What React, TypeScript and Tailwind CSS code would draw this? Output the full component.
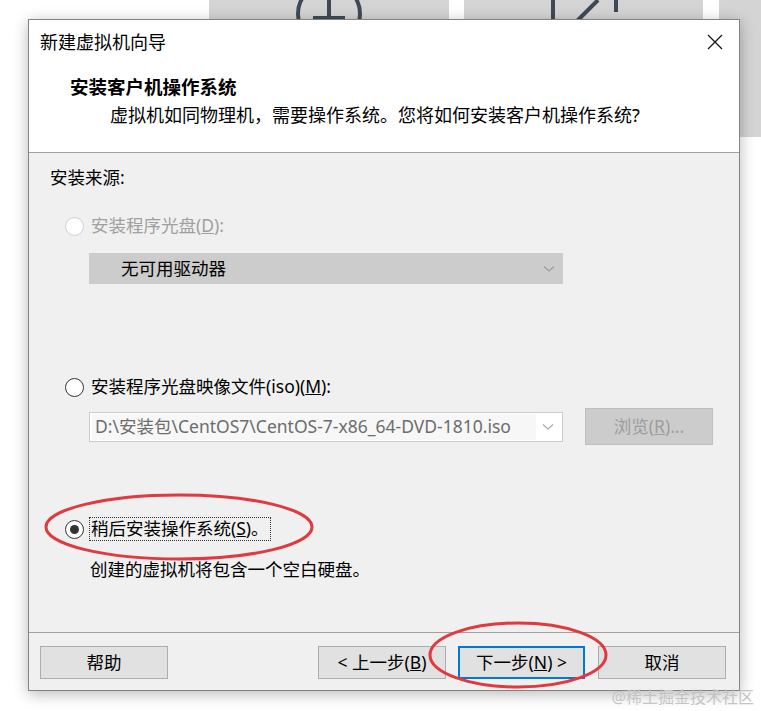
import React from "react";

function Radio({ state }: { state: "disabled" | "off" | "on" }) {
  if (state === "disabled") {
    return <span className="w-[19px] h-[19px] rounded-full border border-[#cfcfcf] bg-white shrink-0" />;
  }
  return (
    <span className="w-[19px] h-[19px] rounded-full border border-[#333333] bg-white shrink-0 flex items-center justify-center">
      {state === "on" && <span className="w-[9px] h-[9px] rounded-full bg-[#333333]" />}
    </span>
  );
}

function Chevron({ color }: { color: string }) {
  return (
    <svg width="12" height="8" viewBox="0 0 12 8" className="shrink-0">
      <path d="M1 1.5 L6 6 L11 1.5" fill="none" stroke={color} strokeWidth="1.1" />
    </svg>
  );
}

function Btn({ children, focused }: { children: React.ReactNode; focused?: boolean }) {
  return (
    <div
      className={
        "h-[33px] flex items-center justify-center bg-[#e1e1e1] text-[17.5px] text-black " +
        (focused ? "w-[127px] border-2 border-[#0078d7]" : "w-[128px] border border-[#adadad]")
      }
    >
      {children}
    </div>
  );
}

export default function App() {
  return (
    <div className="relative w-[761px] h-[711px] overflow-hidden bg-white font-['Noto_Sans','Noto_Sans_CJK_SC',sans-serif] leading-none">
      {/* background tiles */}
      <div className="flex pl-[209px] gap-[15px] h-[137px]">
        <div className="w-[240px] h-full bg-[#d4d4d4]">
          <svg width="240" height="60" viewBox="0 0 240 60">
            <circle cx="120" cy="14" r="31" fill="none" stroke="#3d4a55" strokeWidth="4" />
            <line x1="120" y1="0" x2="120" y2="30" stroke="#3d4a55" strokeWidth="4" />
            <line x1="104" y1="18" x2="136" y2="18" stroke="#3d4a55" strokeWidth="4" />
          </svg>
        </div>
        <div className="w-[239px] h-full bg-[#d4d4d4]">
          <svg width="239" height="60" viewBox="0 0 239 60">
            <line x1="89" y1="0" x2="89" y2="30" stroke="#3d4a55" strokeWidth="4" />
            <line x1="134" y1="0" x2="108" y2="26" stroke="#3d4a55" strokeWidth="4" />
            <line x1="152" y1="0" x2="152" y2="12" stroke="#3d4a55" strokeWidth="4" />
          </svg>
        </div>
        <div className="w-[240px] h-full bg-[#d4d4d4] ml-[1px]" />
      </div>

      {/* dialog */}
      <div className="absolute left-[28px] top-[19px] w-[712px] h-[672px] border border-[#838383] bg-[#f0f0f0] flex flex-col shadow-[0_3px_14px_rgba(0,0,0,0.28)]">
        {/* title bar */}
        <div className="bg-white h-[44px] flex items-center justify-between pl-[11px] pr-[16px]">
          <span className="text-[18px] text-black">新建虚拟机向导</span>
          <svg width="16" height="16" viewBox="0 0 16 16">
            <path d="M1 1 L15 15 M15 1 L1 15" stroke="#111" strokeWidth="1.2" />
          </svg>
        </div>
        {/* header */}
        <div className="bg-white h-[89px] border-b border-[#a0a0a0] pl-[41px] pt-[11px]">
          <div className="text-[18.5px] font-bold leading-[24px] text-black">安装客户机操作系统</div>
          <div className="text-[18px] leading-[24px] text-black mt-[4px] pl-[40px]">
            虚拟机如同物理机，需要操作系统。您将如何安装客户机操作系统?
          </div>
        </div>
        {/* body */}
        <div className="flex-1 pl-[21px] pt-[12px] text-[17.5px] text-black">
          <div className="leading-[24px]">安装来源:</div>

          <div className="mt-[25px] flex items-center gap-[7px] pl-[15px] h-[24px]">
            <Radio state="disabled" />
            <span className="text-[#a0a0a0]">
              安装程序光盘(<span className="underline">D</span>):
            </span>
          </div>
          <div className="mt-[15px] ml-[39px] w-[474px] h-[31px] bg-[#cccccc] flex items-center justify-between pl-[32px] pr-[8px]">
            <span className="text-black">无可用驱动器</span>
            <Chevron color="#9a9a9a" />
          </div>

          <div className="mt-[91px] flex items-center gap-[7px] pl-[15px] h-[24px]">
            <Radio state="off" />
            <span>
              安装程序光盘映像文件(iso)(<span className="underline">M</span>):
            </span>
          </div>
          <div className="mt-[9px] ml-[39px] flex items-center">
            <div className="w-[474px] h-[30px] bg-white border border-[#cccccc] flex items-center pl-[2px] pr-[8px]">
              <div className="w-[444px] h-[26px] bg-[#f7f7f7] flex items-center pl-[3px] text-[#6d6d6d] whitespace-nowrap">
                D:\安装包\CentOS7\CentOS-7-x86_64-DVD-1810.iso
              </div>
              <div className="flex-1 flex justify-end">
                <Chevron color="#a8a8a8" />
              </div>
            </div>
            <div className="ml-[22px] w-[128px] h-[37px] bg-[#cccccc] border border-[#bfbfbf] flex items-center justify-center text-[#9d9d9d]">
              浏览(<span className="underline">R</span>)...
            </div>
          </div>

          <div className="mt-[72px] flex items-center gap-[5px] pl-[15px] h-[24px]">
            <Radio state="on" />
            <span className="border border-dotted border-[#333] px-[1px] h-[24px] flex items-center">
              稍后安装操作系统(<span className="underline">S</span>)。
            </span>
          </div>
          <div className="mt-[16px] pl-[40px] leading-[24px]">创建的虚拟机将包含一个空白硬盘。</div>
        </div>
        {/* footer */}
        <div className="h-[58px] border-t border-[#a0a0a0] flex items-start pt-[13px] pl-[11px] pr-[13px]">
          <Btn>帮助</Btn>
          <div className="flex-1" />
          <Btn>
            &lt; 上一步(<span className="underline">B</span>)
          </Btn>
          <div className="w-[12px]" />
          <Btn focused>
            下一步(<span className="underline">N</span>) &gt;
          </Btn>
          <div className="w-[13px]" />
          <Btn>取消</Btn>
        </div>
      </div>

      {/* red annotations */}
      <svg className="absolute left-0 top-0 pointer-events-none" width="761" height="711" viewBox="0 0 761 711">
        <ellipse cx="179" cy="527" rx="133" ry="32" fill="none" stroke="#e0393e" strokeWidth="3" />
        <ellipse cx="518" cy="655" rx="88" ry="32" fill="none" stroke="#e0393e" strokeWidth="3" />
      </svg>

      {/* watermark */}
      <div className="absolute right-[7px] top-[686px] text-[16px] text-[#c4c4c4] leading-[22px] whitespace-nowrap">
        @稀土掘金技术社区
      </div>
    </div>
  );
}
